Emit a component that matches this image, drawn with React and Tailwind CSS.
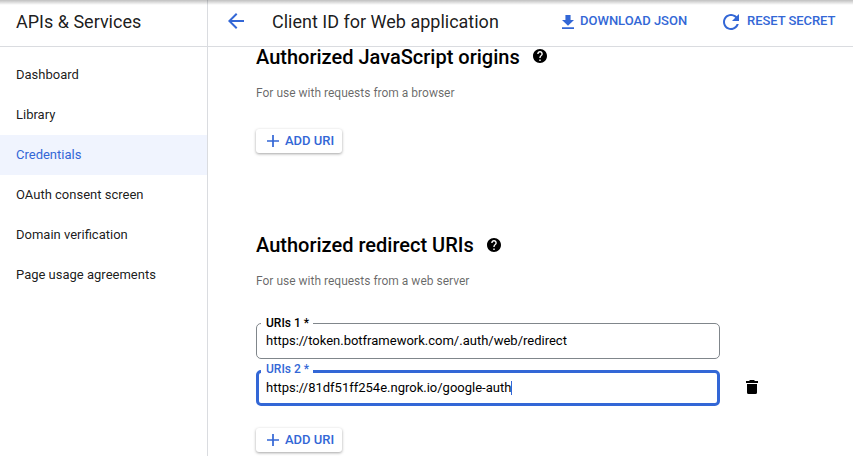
const navItems = [
  { label: 'Dashboard' },
  { label: 'Library' },
  { label: 'Credentials', active: true },
  { label: 'OAuth consent screen' },
  { label: 'Domain verification' },
  { label: 'Page usage agreements' },
];

function Icon({ viewBox, className, d }) {
  return (
    <svg viewBox={viewBox} className={`block shrink-0 ${className}`} fill="currentColor" preserveAspectRatio="none">
      <path d={d} />
    </svg>
  );
}

function HelpIcon({ className }) {
  return (
    <Icon
      viewBox="2 2 20 20"
      className={`size-3.5 text-black ${className}`}
      d="M12 2C6.48 2 2 6.48 2 12s4.48 10 10 10 10-4.48 10-10S17.52 2 12 2zm1 17h-2v-2h2v2zm2.07-7.75l-.9.92C13.45 12.9 13 13.5 13 15h-2v-.5c0-1.1.45-2.1 1.17-2.83l1.24-1.26c.37-.36.59-.86.59-1.41 0-1.1-.9-2-2-2s-2 .9-2 2H8c0-2.21 1.79-4 4-4s4 1.79 4 4c0 .88-.36 1.68-.93 2.25z"
    />
  );
}

function AddButton() {
  return (
    <button className="flex h-6 w-[86px] items-center rounded-[3px] bg-white pl-[11px] text-[13px] font-medium text-[#3367d6] shadow-[0_1px_3px_rgba(0,0,0,0.36)]">
      <Icon viewBox="5 5 14 14" className="mr-1.5 size-3" d="M19 13h-6v6h-2v-6H5v-2h6V5h2v6h6v2z" />
      ADD URI
    </button>
  );
}

function SectionTitle({ children, iconClassName }) {
  return (
    <h2 className="flex h-6 items-center gap-[13px] text-[20px] font-medium whitespace-nowrap text-black">
      <span>{children}</span>
      <HelpIcon className={iconClassName} />
    </h2>
  );
}

function UriField({ label, value, focused }) {
  return (
    <div
      className={`relative flex h-9 w-[464px] items-center rounded-[5px] text-[13px] text-black ${
        focused ? 'border-3 border-[#3367d6] pl-[7px]' : 'border border-[#80868b] pl-[9px]'
      }`}
    >
      <span
        className={`absolute bg-white pr-1 pl-[5px] text-[12px] leading-3 font-medium whitespace-nowrap ${
          focused ? '-top-2.5 left-[2px] text-[#3367d6]' : '-top-[7px] left-1 text-black'
        }`}
      >
        {label}
      </span>
      <span>{value}</span>
      {focused && <span className="h-3.5 w-px bg-[#3367d6]" />}
    </div>
  );
}

export default function App() {
  return (
    <div
      className="relative flex h-[456px] w-[853px] overflow-hidden bg-white text-[13px] text-black/90"
      style={{ fontFamily: 'Roboto, "Liberation Sans", sans-serif' }}
    >
      <aside className="w-52 shrink-0 border-r border-[#dadce0]">
        <div className="flex h-[47px] items-center border-b border-[#dadce0] pl-4 text-[18px] whitespace-nowrap">
          <span className="-mt-1">APIs &amp; Services</span>
        </div>
        <nav className="pt-2">
          {navItems.map((item) => (
            <a
              key={item.label}
              className={`flex h-10 items-center pl-4 whitespace-nowrap ${
                item.active ? 'bg-[#f0f4fe] text-[#3367d6]' : ''
              }`}
            >
              {item.label}
            </a>
          ))}
        </nav>
      </aside>

      <main className="min-w-0 flex-1">
        <header className="flex h-[47px] items-center border-b border-[#dadce0] pb-1 pl-5 text-[#3367d6]">
          <Icon viewBox="4 4 16 16" className="size-4" d="M20 11H7.83l5.59-5.59L12 4l-8 8 8 8 1.41-1.41L7.83 13H20v-2z" />
          <h1 className="ml-7 w-[290px] text-[18px] whitespace-nowrap text-black/90">Client ID for Web application</h1>
          <Icon viewBox="5 3 14 17" className="mt-px h-3.5 w-3" d="M19 9h-4V3H9v6H5l7 7 7-7zM5 18v2h14v-2H5z" />
          <span className="ml-1.5 w-[143px] font-medium whitespace-nowrap">DOWNLOAD JSON</span>
          <Icon
            viewBox="4 4 16 16"
            className="mt-px size-4"
            d="M17.65 6.35C16.2 4.9 14.21 4 12 4c-4.42 0-7.99 3.58-7.99 8s3.57 8 7.99 8c3.73 0 6.84-2.55 7.73-6h-2.08c-.82 2.33-3.04 4-5.65 4-3.31 0-6-2.69-6-6s2.69-6 6-6c1.66 0 3.14.69 4.22 1.78L13 11h7V4l-2.35 2.35z"
          />
          <span className="ml-2 font-medium tracking-[-0.05px] whitespace-nowrap">RESET SECRET</span>
        </header>

        <div className="pl-12">
          <section className="-mt-0.5">
            <SectionTitle iconClassName="mb-0.5">Authorized JavaScript origins</SectionTitle>
            <p className="mt-4 mb-7 h-4 text-[12px] leading-4 text-black/60">For use with requests from a browser</p>
            <AddButton />
          </section>

          <section className="mt-20">
            <SectionTitle>Authorized redirect URIs</SectionTitle>
            <p className="mt-4 mb-[34px] h-4 text-[12px] leading-4 text-black/60">For use with requests from a web server</p>
            <UriField label="URIs 1 *" value="https://token.botframework.com/.auth/web/redirect" />
            <div className="mt-[11px] mb-[22px] flex items-center">
              <UriField label="URIs 2 *" value="https://81df51ff254e.ngrok.io/google-auth" focused />
              <Icon
                viewBox="0 0 12 14"
                className="mb-0.5 ml-[26px] h-3.5 w-3 text-black"
                d="M3.5 0h5v1H12v2H0V1h3.500zM1 4h10v8.500q0 1.500-1.500 1.500h-7Q1 14 1 12.500z"
              />
            </div>
            <AddButton />
          </section>
        </div>
      </main>

      <div className="pointer-events-none absolute inset-x-0 top-0 h-[5px] bg-linear-to-b from-black/25 to-transparent" />
    </div>
  );
}
